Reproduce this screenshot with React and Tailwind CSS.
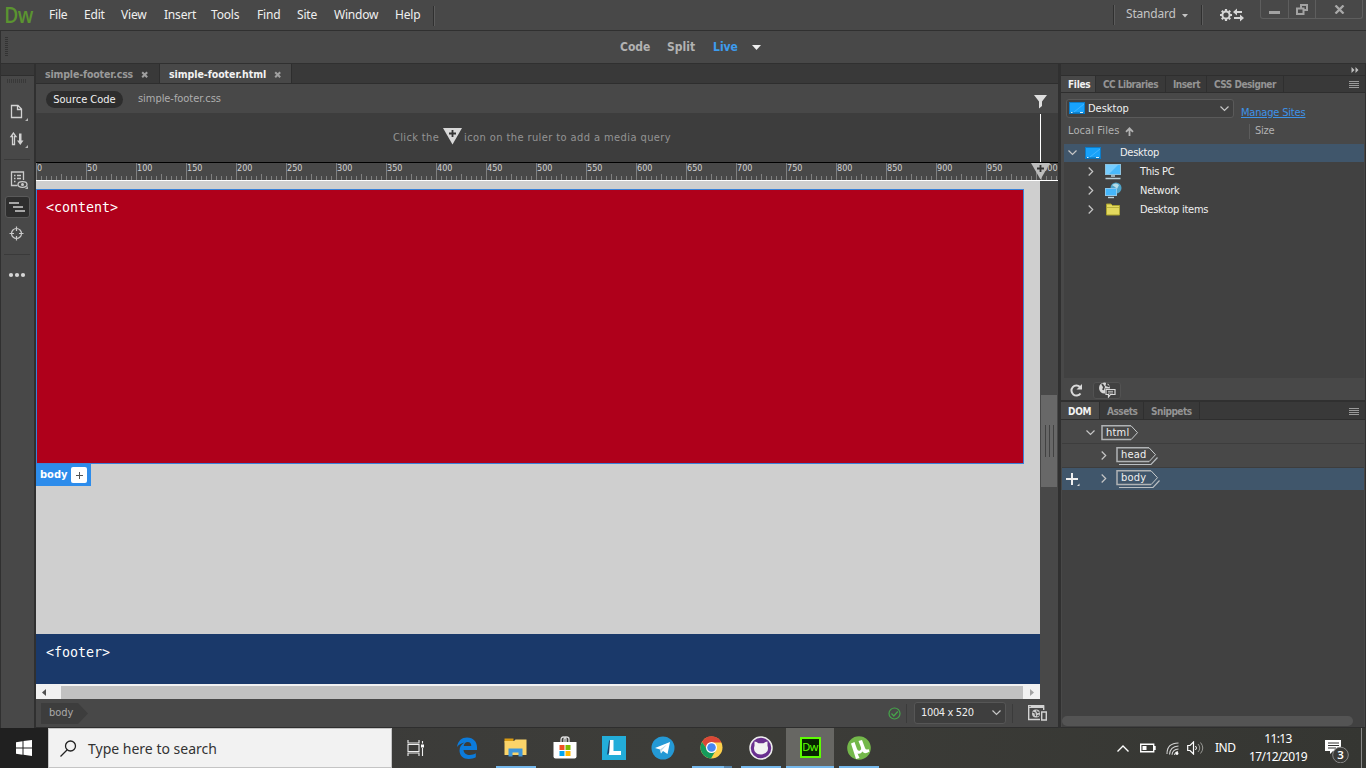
import React from "react";

const ui = "font-['Noto_Sans','Open_Sans',sans-serif]";
const tah = "font-['DejaVu_Sans_Condensed','DejaVu_Sans',sans-serif]";

function Svg({ w, h, className = "", children }) {
  return (
    <svg width={w} height={h} viewBox={`0 0 ${w} ${h}`} className={`block shrink-0 ${className}`} fill="none">
      {children}
    </svg>
  );
}

const menus = [
  ["File", "w-[35px]"],
  ["Edit", "w-[37px]"],
  ["View", "w-[43px]"],
  ["Insert", "w-[47px]"],
  ["Tools", "w-[46px]"],
  ["Find", "w-[40px]"],
  ["Site", "w-[37px]"],
  ["Window", "w-[61px]"],
  ["Help", "w-[38px]"],
];

function MenuBar() {
  return (
    <div className="flex h-[31px] border-b border-[#303030] bg-[#484848]">
      <div className="w-[49px] shrink-0 origin-left scale-x-[0.87] pl-[5px] font-['Open_Sans',sans-serif] text-[22px] leading-[28px] font-semibold tracking-[-0.8px] text-[#5b9430]">Dw</div>
      <div className="flex h-[30px] items-center text-[12px] tracking-[-0.2px] text-[#f0f0f0]">
        {menus.map(([t, w]) => (
          <span key={t} className={`${w} shrink-0`}>{t}</span>
        ))}
        <span className="mt-[1px] h-[20px] w-[2px] border-l border-[#303030] bg-[#5c5c5c]" />
      </div>
      <div className="ml-auto flex">
        <span className="mt-[5px] h-[20px] w-[2px] border-l border-[#303030] bg-[#5c5c5c]" />
        <span className="w-[57px] pl-[11px] text-[12px] leading-[28px] tracking-[-0.2px] text-[#c4c4c4]">Standard</span>
        <Svg w={17} h={30}>
          <path d="M10 14h6l-3 3.500z" fill="#c4c4c4" />
        </Svg>
        <span className="mt-[5px] ml-[12px] h-[20px] w-[2px] border-l border-[#303030] bg-[#5c5c5c]" />
        <Svg w={26} h={30} className="ml-[16px]">
          <g stroke="#d6d6d6">
            <circle cx="7" cy="15" r="3.6" strokeWidth="2" />
            <path d="M7 9v2M7 19v2M1 15h2M11 15h2M2.8 10.8l1.3 1.3M9.9 17.9l1.3 1.3M2.8 19.2l1.3-1.3M9.9 12.1l1.3-1.3" strokeWidth="2.2" />
            <path d="M17 12h6M15 18h7" strokeWidth="2" />
          </g>
          <path d="M18 8.5v7l-4-3.5zM21 14.5v7l4-3.5z" fill="#d6d6d6" />
        </Svg>
        <div className="ml-[15px] flex h-[19px] w-[103px] rounded-b-[3px] border border-t-0 border-[#5e5e5e]">
          <div className="flex w-[28px] justify-center border-r border-[#5e5e5e] pt-[11px]"><span className="h-[3px] w-[11px] bg-[#a2a2a2]" /></div>
          <div className="flex w-[27px] justify-center border-r border-[#5e5e5e] pt-[4px]">
            <Svg w={12} h={11}>
              <path d="M5 3.5V1h6v5H8M1 4.5h6.5V10H1z" stroke="#a2a2a2" strokeWidth="2" />
            </Svg>
          </div>
          <div className="flex flex-1 justify-center pt-[5px]">
            <Svg w={11} h={9}><path d="M1.5 0.5l8 8M9.5 0.5l-8 8" stroke="#a8a8a8" strokeWidth="2.3" /></Svg>
          </div>
        </div>
        <span className="w-[3px]" />
      </div>
    </div>
  );
}

function ViewBar() {
  return (
    <div className="flex h-[33px] items-center border-b border-l border-[#303030] bg-[#484848]">
      <Svg w={7} h={20}>
        {Array.from({ length: 10 }, (_, i) => <path key={i} d={`M4 ${i * 2 + 0.5}h3`} stroke="#333" />)}
      </Svg>
      <div className={`${tah} ml-[612px] flex items-center text-[12px] font-bold text-[#b2b2b2]`}>
        <span className="w-[47px]">Code</span>
        <span className="w-[46px]">Split</span>
        <span className="w-[38px] text-[#3d9bee]">Live</span>
        <Svg w={11} h={6}><path d="M1 1h9L5.5 6z" fill="#eee" /></Svg>
      </div>
    </div>
  );
}

function ToolRail() {
  return (
    <div className="flex w-[36px] shrink-0 flex-col border-x border-r-2 border-[#303030] bg-[#484848]">
      <div className="h-[12px] shrink-0 border-b border-[#2e2e2e] bg-[#393939]" />
      <Svg w={33} h={210}>
        <path d="M6 5h20" stroke="#393939" strokeWidth="4" strokeDasharray="1 1" />
        <g stroke="#d2d2d2" strokeWidth="1.3">
          <path d="M10.500 29.500h6.500l3.500 3.500v8.500h-10zM16.500 30v3.500h4" />
          <path d="M12.500 57l-2.500 3.500h1.500v8h2v-8h1.500z" />
        </g>
        <path d="M27 45v-3l-3 3zM27 72v-3l-3 3z" fill="#b5b5b5" />
        <path d="M18 57.500h2.500v7h2l-3.200 4.500-3.300-4.500h2z" fill="#d2d2d2" />
        <path d="M3 83.500h26M3 178.500h26" stroke="#3a3a3a" />
        <g stroke="#cacaca" strokeWidth="1.300">
          <path d="M16.500 109.500h-6v-13.500h12v8" />
          <path d="M13 99.500h1.500M16 99.500h4M13 102.500h1.500M16 102.500h4M13 105.500h1.500" />
          <ellipse cx="21.500" cy="108.500" rx="4.500" ry="2.800" />
        </g>
        <circle cx="21.500" cy="108.500" r="1.500" fill="#cacaca" />
        <path d="M27 113v-3l-3 3z" fill="#b5b5b5" />
        <rect x="4.500" y="120.500" width="24" height="21" rx="2.500" fill="#2e2e2e" stroke="#5a5a5a" />
        <path d="M8 127h10M12 131h10M14 135h10" stroke="#d0d0d0" strokeWidth="1.700" />
        <circle cx="15.500" cy="157.500" r="5" stroke="#cacaca" strokeWidth="1.200" />
        <path d="M15.500 150.500v4.500M15.500 160v4.500M8.500 157.500h4.500M18 157.500h4.500" stroke="#cacaca" strokeWidth="1.200" />
        <g fill="#d6d6d6"><circle cx="10" cy="199" r="2.100" /><circle cx="16" cy="199" r="2.100" /><circle cx="22" cy="199" r="2.100" /></g>
      </Svg>
    </div>
  );
}

function Close() {
  return <Svg w={8} h={8}><path d="M1.200 1.200l5 5M6.200 1.200l-5 5" stroke="#a0a0a0" strokeWidth="2" /></Svg>;
}

function RulerMarker({ fill = "#d8d8d8" }) {
  return (
    <Svg w={20} h={17}>
      <path d="M0 0h19L9.500 16.500z" fill={fill} />
      <path d="M9.500 2v7M6 5.500h7" stroke="#333" strokeWidth="1.800" />
    </Svg>
  );
}

function Ruler() {
  return (
    <div className="relative h-[18px] border-t border-black bg-[#484848]">
      <Svg w={1022} h={17}>
        {Array.from({ length: 205 }, (_, i) => {
          const h = i % 10 === 0 ? 17 : i % 5 === 0 ? 6 : 4;
          return <path key={i} d={`M${i * 5 + 0.5} ${17 - h}V17`} stroke="#808080" />;
        })}
      </Svg>
      <div className={`${tah} absolute top-0 left-[1px] flex w-[1021px] overflow-hidden text-[9px] leading-[10px] text-[#d0d0d0]`}>
        {Array.from({ length: 21 }, (_, i) => <span key={i} className="w-[50px] shrink-0">{i * 50}</span>)}
      </div>
      <div className="absolute top-0 left-[995px]"><RulerMarker fill="#bcbcbc" /></div>
    </div>
  );
}

function Document() {
  return (
    <div className="flex w-[1023px] shrink-0 flex-col border-r border-[#303030] bg-[#484848]">
      <div className={`${tah} flex h-[20px] shrink-0 border-b border-[#2e2e2e] bg-[#393939] text-[10.500px] font-bold`}>
        <div className="flex w-[124px] items-center border-r border-[#2e2e2e] pt-[2px] pl-[9px] text-[#999]"><span className="w-[96px] tracking-[-0.150px]">simple-footer.css</span><Close /></div>
        <div className="flex w-[132px] items-center border-r border-[#2e2e2e] bg-[#484848] pt-[2px] pl-[9px] text-[#f2f2f2]"><span className="w-[105px] tracking-[-0.050px]">simple-footer.html</span><Close /></div>
      </div>
      <div className={`${tah} relative flex h-[29px] shrink-0 items-center pt-[1px] pl-[10px] text-[11px]`}>
        <span className="h-[17px] w-[77px] rounded-full bg-[#2d2d2d] text-center leading-[17px] text-[#f0f0f0]">Source Code</span>
        <span className="ml-[15px] pt-[1px] tracking-[-0.050px] text-[#aeaeae]">simple-footer.css</span>
        <Svg w={14} h={14} className="absolute top-[11px] left-[998px]"><path d="M0 0h13L8 6.500v4.500L5 13.500v-7z" fill="#dedede" /></Svg>
      </div>
      <div className="flex h-[49px] shrink-0 bg-[#3d3d3d]">
        <div className={`${tah} flex w-[1004px] items-center pl-[357px] text-[11px] text-[#949494]`}>
          <span className="w-[50px] pt-[2px] tracking-[0.350px]">Click the</span>
          <span className="pb-[3px]"><RulerMarker /></span>
          <span className="pt-[2px] pl-[1px] tracking-[0.410px] whitespace-nowrap">icon on the ruler to add a media query</span>
        </div>
        <span className="mt-[1px] w-px bg-white" />
      </div>
      <Ruler />
      <div className="flex min-h-0 flex-1 border-t border-white">
        <div className="w-[1004px] font-['DejaVu_Sans_Mono',monospace] text-[13.300px] text-white">
          <div className="flex h-[503px] flex-col bg-[#cfcfcf]">
            <div className="mt-[8px] h-[275px] w-[988px] border border-[#3b82d8] bg-[#af001b] pt-[9px] pl-[9px] leading-[18px]">&lt;content&gt;</div>
            <div className="flex h-[22px] w-[55px] items-center bg-[#2d8ceb] pl-[4px]">
              <span className={`${tah} w-[31px] text-[11px] font-bold`}>body</span>
              <span className="flex h-[16px] w-[16px] items-center justify-center rounded-[2px] bg-white"><Svg w={7} h={7}><path d="M3.500 0v7M0 3.500h7" stroke="#555" /></Svg></span>
            </div>
            <div className="mt-auto h-[50px] bg-[#1a396a] pt-[10px] pl-[10px] leading-[18px]">&lt;footer&gt;</div>
          </div>
          <div className="flex h-[15px] bg-[#f1f1f1]">
            <Svg w={25} h={15}><path d="M10 5v7L6 8.500z" fill="#505050" /></Svg>
            <span className="mt-[2px] flex-1 bg-[#c1c1c1]" />
            <Svg w={17} h={15}><path d="M7 5v7l4-3.500z" fill="#a3a3a3" /></Svg>
          </div>
        </div>
        <div className="flex-1 pl-[1px]">
          <div className="mt-[214px] flex h-[92px] w-[16px] items-center justify-center gap-[3px] bg-[#686868]">
            {[0, 1, 2].map((i) => <span key={i} className="h-[32px] w-px bg-[#424242]" />)}
          </div>
        </div>
      </div>
      <div className={`${tah} flex h-[29px] shrink-0 items-center border-b border-[#2e2e2e] text-[11px]`}>
        <div className="relative ml-[5px] flex h-[21px] w-[48px] items-center">
          <Svg w={48} h={21} className="absolute inset-0"><path d="M0 0h37l10 10.500L37 21H0z" fill="#3d3d3d" /></Svg>
          <span className="relative pt-[1px] pl-[8px] text-[11px] text-[#a9a9a9]">body</span>
        </div>
        <Svg w={13} h={13} className="ml-[799px]"><circle cx="6.500" cy="6.500" r="5.500" stroke="#46a54a" strokeWidth="1.200" /><path d="M3.500 6.500l2.300 2.500 4-4.500" stroke="#46a54a" strokeWidth="1.300" /></Svg>
        <span className="ml-[5px] h-[19px] w-px bg-[#3b3b3b]" />
        <div className="ml-[7px] flex h-[22px] w-[92px] items-center justify-between rounded-[3px] border border-[#565656] bg-[#3e3e3e] pr-[4px] pl-[6px] text-[#ededed]">
          <span className="pt-[1px] tracking-[-0.350px]">1004 x 520</span>
          <Svg w={9} h={6}><path d="M0.500 0.500l4 4 4-4" stroke="#c6c6c6" strokeWidth="1.200" /></Svg>
        </div>
        <span className="ml-[6px] h-[19px] w-px bg-[#3b3b3b]" />
        <Svg w={20} h={16} className="ml-[15px]">
          <path d="M12 14.500H0.700V1h15v4" stroke="#d2d2d2" strokeWidth="1.400" /><path d="M0 1.500h16" stroke="#d2d2d2" strokeWidth="3" /><path d="M1.500 1.500h1" stroke="#484848" />
          <circle cx="8" cy="8.500" r="4" fill="#cacaca" /><path d="M4.500 7l2.500 1 .5 3M8.500 5.500l1 2 2-.5M9 11l2-1" stroke="#484848" strokeWidth="1.100" />
          <path d="M13.700 7h4.600v8h-4.600z" fill="#484848" stroke="#d2d2d2" strokeWidth="1.400" />
        </Svg>
      </div>
    </div>
  );
}

function Burger() {
  return <Svg w={10} h={8}><path d="M0 0.500h10M0 2.500h10M0 4.500h10M0 6.500h10" stroke="#9b9b9b" /></Svg>;
}

function PanelTabs({ items, className }) {
  return (
    <div className={`${tah} flex border-b border-[#2e2e2e] bg-[#393939] text-[10px] font-bold text-[#949494] ${className}`}>
      {items.map(([t, w], i) => (
        <div key={t} className={`${w} flex shrink-0 items-center border-r border-[#2f2f2f] pt-[1px] whitespace-nowrap ${i === 0 ? "bg-[#484848] pl-[7px] tracking-[-0.300px] text-[#f2f2f2]" : "pl-[7px] tracking-[-0.500px]"}`}>{t}</div>
      ))}
      <div className="ml-auto flex items-center pt-[2px] pr-[6px]"><Burger /></div>
    </div>
  );
}

function Screen() {
  return (
    <Svg w={16} h={13}>
      <rect x="0.500" y="0.500" width="15" height="11" fill="#18a2fb" stroke="#0c7cc8" />
      <path d="M1 11h14" stroke="#0869a8" /><path d="M2 10.500h1.500M11 10.500h3" stroke="#d8f0ff" />
      <path d="M5 10L15 2" stroke="#42b6ff" />
    </Svg>
  );
}
function Pc() {
  return (
    <Svg w={17} h={16}>
      <rect x="0.500" y="0.500" width="15" height="10" fill="#49b9fb" stroke="#8cc2df" /><path d="M1 1h12L4 10H1z" fill="#76cdff" />
      <path d="M6 12h4M0.500 14.500h15" stroke="#b8ced8" strokeWidth="1.500" />
    </Svg>
  );
}
function Net() {
  return (
    <Svg w={17} h={17}>
      <circle cx="11" cy="6" r="5.500" fill="#4ea3c8" /><path d="M7 3q4-3 7 0l-2 4-2-2z" fill="#b7dce6" />
      <rect x="0.500" y="6.500" width="11" height="7" fill="#45b6fb" stroke="#8cc8ec" /><path d="M3 15.500h6" stroke="#bfd4de" strokeWidth="1.400" />
    </Svg>
  );
}
function Folder() {
  return (
    <Svg w={17} h={14}>
      <path d="M1.500 1h4.500l1.500 1.500h7v9.500h-13z" fill="#e3d95e" stroke="#aaa22e" /><path d="M2 4.500h12" stroke="#bdb43d" />
    </Svg>
  );
}
function Chevron({ down }) {
  return down ? (
    <Svg w={9} h={6}><path d="M0.500 0.500l4 4 4-4" stroke="#c6c6c6" strokeWidth="1.200" /></Svg>
  ) : (
    <Svg w={6} h={9}><path d="M0.700 0.500l4 4-4 4" stroke="#c6c6c6" strokeWidth="1.200" /></Svg>
  );
}

function FilesPanel() {
  const rows = [["This PC", Pc], ["Network", Net], ["Desktop items", Folder]];
  return (
    <div className={`${tah} flex h-[338px] shrink-0 flex-col border-b-2 border-[#303030] text-[11px] tracking-[-0.250px] text-[#f0f0f0]`}>
      <div className="flex h-[12px] shrink-0 items-center justify-end border-b border-[#2e2e2e] bg-[#393939] pr-[6px]">
        <Svg w={8} h={6}><path d="M0.500 0v6l3-3zM4.500 0v6l3-3z" fill="#bdbdbd" /></Svg>
      </div>
      <PanelTabs className="h-[17px] shrink-0" items={[["Files", "w-[35px]"], ["CC Libraries", "w-[70px]"], ["Insert", "w-[41px]"], ["CSS Designer", "w-[77px]"]]} />
      <div className="flex h-[25px] shrink-0 pt-[6px] pl-[5px]">
        <div className="flex h-[19px] w-[168px] items-center rounded-[3px] border border-[#5a5a5a] bg-[#404040] pl-[2px]">
          <Screen /><span className="flex-1 pt-[2px] pl-[3px] tracking-[0px]">Desktop</span><span className="pr-[4px]"><Chevron down /></span>
        </div>
        <span className="pt-[6px] pl-[7px] text-[11px] leading-[15px] tracking-[-0.180px] text-[#3d93e8] underline">Manage Sites</span>
      </div>
      <div className="flex h-[26px] shrink-0 items-center pl-[7px] text-[#b2b2b2]">
        <span className="pt-[1px] tracking-[0.100px]">Local Files</span>
        <Svg w={10} h={9} className="ml-[5px]"><path d="M4.500 9V1.500M1 4.800L4.500 1.300 8 4.800" stroke="#b2b2b2" strokeWidth="1.800" /></Svg>
        <span className="ml-auto h-[15px] w-px bg-[#5c5c5c]" /><span className="w-[115px] pt-[1px] pl-[5px]">Size</span>
      </div>
      <div className="mx-[3px] mr-[1px] flex-1 bg-[#414141]">
        <div className="flex h-[18px] items-center bg-[#40566b] pl-[4px]"><Chevron down /><span className="w-[43px] pl-[8px]"><Screen /></span><span>Desktop</span></div>
        {rows.map(([t, I]) => (
          <div key={t} className="flex h-[19px] items-center pl-[24px]"><Chevron /><span className="w-[46px] pl-[11px]"><I /></span><span className="pt-[2px]">{t}</span></div>
        ))}
      </div>
      <div className="flex h-[22px] shrink-0 items-center pt-[2px] pl-[9px]">
        <Svg w={13} h={13}><path d="M10.500 9.500a5 5 0 1 1-.5-6.500" stroke="#dadada" strokeWidth="2" /><path d="M12 0v5.500H6.500z" fill="#dadada" /></Svg>
        <div className="ml-[10px] flex h-[17px] w-[28px] items-center justify-center rounded-[3px] border border-[#525252] bg-[#414141]">
          <Svg w={18} h={16}>
            <circle cx="6.500" cy="6" r="5.500" fill="#d6d6d6" /><path d="M4 2l2 3-1 3M9 1l-.5 2.500 3 1" stroke="#414141" strokeWidth="1.800" />
            <path d="M7 6.500h11v9H7z" fill="#414141" /><path d="M8 7.500h9v5h-4.500l-2 2.500v-2.500H8z" stroke="#dadada" strokeWidth="1.200" /><path d="M10 9.300h5M10 11h5" stroke="#dadada" strokeWidth=".8" />
          </Svg>
        </div>
      </div>
    </div>
  );
}

function Tag({ text, w, stacked }) {
  return (
    <div className="relative h-[19px]">
      <Svg w={46} h={19}>
        <path d={`M${w - 7} 14.500H1V0.700h${w - 8}`} stroke="#b0b3b5" strokeWidth="1.500" />
        <path d={`M${w - 7} 0.700l6.500 7-6.500 7`} stroke="#c8ccce" />
        {stacked && <path d={`M3 17.500h${w - 8}l6.500-7`} stroke="#b9bec2" strokeWidth="1.200" />}
      </Svg>
      <span className="absolute top-px left-[5px] leading-[14px] tracking-[0.200px]">{text}</span>
    </div>
  );
}

function DomPanel() {
  return (
    <div className={`${tah} flex min-h-0 flex-1 flex-col border-b border-[#2e2e2e] text-[11px] text-[#f0f0f0]`}>
      <PanelTabs className="h-[18px] shrink-0" items={[["DOM", "w-[39px]"], ["Assets", "w-[44px]"], ["Snippets", "w-[56px]"]]} />
      <div className="mr-[1px] ml-[1px] flex flex-1 flex-col bg-[#414141]">
        <div className="flex h-[24px] border-b border-[#3d3d3d] bg-[#484848] pt-[5px] pl-[24px]"><span className="mt-[5px] w-[15px]"><Chevron down /></span><Tag text="html" w={37} /></div>
        <div className="flex h-[24px] border-b border-[#3d3d3d] bg-[#484848] pt-[3px] pl-[39px]"><span className="mt-[4px] w-[15px]"><Chevron /></span><Tag text="head" w={40} stacked /></div>
        <div className="flex h-[22px] bg-[#40566b] pt-[2px] pl-[4px]">
          <Svg w={15} h={16} className="mr-[20px]"><path d="M6 3v12M0 9h12" stroke="#eee" strokeWidth="2" /><path d="M13.500 16v-2.500L11 16z" fill="#ddd" /></Svg>
          <span className="mt-[4px] w-[15px]"><Chevron /></span><Tag text="body" w={42} stacked />
        </div>
        <div className="mt-auto mr-[11px] mb-[1px] h-[10px] rounded-full bg-[#545454]" />
      </div>
    </div>
  );
}

function TaskItem({ children, active, className = "w-[49px]", bar = "w-[40px]" }) {
  return (
    <div className={`flex shrink-0 flex-col items-center ${className}`}>
      <div className="flex flex-1 items-center pt-[1px]">{children}</div>
      <div className={`h-[2px] ${bar} ${active ? "bg-[#76b9ed]" : ""}`} />
    </div>
  );
}

function TaskBar() {
  return (
    <div className={`${ui} flex h-[40px] shrink-0 bg-gradient-to-r from-[#3a3a3a] via-[#3d3d39] to-[#353632] text-white`}>
      <div className="flex w-[48px] shrink-0 items-center justify-center bg-[#202020]">
        <Svg w={16} h={16}><path d="M0 2.300l6.500-1v6.200H0zM7.500 1.100L16 0v7.500H7.500zM0 8.500h6.500v6.200L0 13.700zM7.500 8.500H16V16l-8.500-1.200z" fill="#fff" /></Svg>
      </div>
      <div className="flex w-[344px] shrink-0 items-center border border-[#c4c4c4] bg-[#f2f2f2] text-[#333]">
        <Svg w={17} h={17} className="ml-[11px]"><circle cx="10.500" cy="6" r="5" stroke="#222" strokeWidth="1.300" /><path d="M7 10l-6.500 6.500" stroke="#222" strokeWidth="1.300" /></Svg>
        <span className="pl-[11px] text-[14px]">Type here to search</span>
      </div>
      <div className="flex">
        <TaskItem className="w-[48px]">
          <Svg w={18} h={16}><path d="M1 0v3h11V0M1 16v-3h11v3M1 4.500h11v7H1zM15.500 1v2.500M15.500 8v8" stroke="#eee" strokeWidth="1.100" /><path d="M14 4.500h3v3h-3z" fill="#fff" /></Svg>
        </TaskItem>
        <TaskItem className="w-[51px] pl-[2px]">
          <Svg w={22} h={22}><path d="M1 10C2 3.500 6 .5 11 .5c6.500 0 10 4.500 10 9.800V13H7.500c.3 3.500 3 5 6.300 5 2.300 0 4.300-.7 6-1.700v4c-2 1-4.300 1.700-7 1.700-5.500 0-9.300-3.300-9.300-8.500 0-3.500 2-6.500 5-8C5 6 2.500 8 1 10zm6.700-1h7.600c0-2.500-1.300-4-3.600-4-2.200 0-3.500 1.500-4 4z" fill="#0c7bdb" /></Svg>
        </TaskItem>
        <TaskItem active>
          <Svg w={23} h={19}><path d="M0.500 0.500h9v4h-9z" fill="#d99b12" /><path d="M0.500 3H10l1.500-1.500h11V17H.5z" fill="#fbd469" /><path d="M4.500 18.500v-8h14v8h-4v-4h-6v4z" fill="#3f96db" /></Svg>
        </TaskItem>
        <TaskItem>
          <Svg w={24} h={24}><path d="M8 6V4q0-3 2.500-3T13 3v3M11 6V4q0-3 2.500-3T16 3v3" stroke="#ddd" strokeWidth="1.300" /><path d="M.5 6h23v14.500q0 2-2 2h-19q-2 0-2-2z" fill="#fff" /><path d="M6.500 9h5v5h-5z" fill="#f05022" /><path d="M12.500 9h5v5h-5z" fill="#7fba00" /><path d="M6.500 15h5v5h-5z" fill="#00a4ef" /><path d="M12.500 15h5v5h-5z" fill="#ffb900" /></Svg>
        </TaskItem>
        <TaskItem>
          <Svg w={24} h={24}><path d="M0 0h24v24H0z" fill="#23add9" /><path d="M8 4v12l-3 3 2-14z" fill="#143e69" /><path d="M8 4h3.500v11H19v4H7z" fill="#fff" /></Svg>
        </TaskItem>
        <TaskItem>
          <Svg w={24} h={24}><circle cx="12" cy="12" r="11.500" fill="#2499d5" /><path d="M4 12l15-6-2.500 12-4.500-3-2 2.500-1-4z" fill="#fff" /><path d="M9 13.500l7-5-5.500 6-.5 3z" fill="#b8d7e8" /></Svg>
        </TaskItem>
        <TaskItem active bar="w-[40px] border-r-8 border-[#5685ac]">
          <Svg w={23} h={23}><circle cx="11.500" cy="11.500" r="11" fill="#fdd04b" /><path d="M2 6a11 11 0 0 1 19.500.5H11.500L7.500 14z" fill="#db4737" /><path d="M2 6a11 11 0 0 0 9 16.500l5-8.500-8.500 0z" fill="#159b5c" /><circle cx="11.500" cy="11.500" r="5.500" fill="#fff" /><circle cx="11.500" cy="11.500" r="4.300" fill="#4787f1" /></Svg>
        </TaskItem>
        <TaskItem active>
          <Svg w={24} h={24}><circle cx="12" cy="12" r="11" fill="#69308f" stroke="#eee" strokeWidth="1.500" /><path d="M5.500 5.500q2 0 4 1.700h5q2-1.700 4-1.700V10q1 2 0 5-2 3.500-6.500 3.500T5.500 15q-1-3 0-5z" fill="#f2f2f2" /></Svg>
        </TaskItem>
        <TaskItem active className="ml-[1px] w-[48px] bg-[#676763]" bar="w-full">
          <div className="flex h-[21px] w-[21px] items-center justify-center border-2 border-[#5dfc02] bg-[#072401] text-[11px] tracking-[-0.500px] text-[#5dfc02]">Dw</div>
        </TaskItem>
        <TaskItem active>
          <Svg w={24} h={24}><circle cx="12" cy="12" r="11.800" fill="#74b84a" /><path d="M4 7.500l3.500-1.500 2.500 7q1 2.500 3 1.500 1.800-1 1-3L11.500 5 15 4l3 8q1 2.500 3.500 1l1 2.500q-5 3.500-7 0-2 3-5 2l2 4.500-3.500 1z" fill="#fff" /></Svg>
        </TaskItem>
      </div>
      <div className="ml-auto flex h-[40px] items-center text-[12px]">
        <Svg w={12} h={7}><path d="M.5 6.500l5.500-5.500 5.500 5.500" stroke="#fff" strokeWidth="1.400" /></Svg>
        <Svg w={16} h={10} className="ml-[11px]"><path d="M.7 1.200h13v7.600H.7zM15 3v4" stroke="#fff" strokeWidth="1.400" /><path d="M2.500 3h4v4h-4z" fill="#fff" /></Svg>
        <Svg w={13} h={13} className="ml-[10px]"><path d="M1 12Q1 1 12.500 1M3.500 12.500Q4 4.500 12.500 4M6 12.700Q6.500 7.500 12.500 7M8.500 13q.5-3 3.500-3.500" stroke="#d3d3d3" strokeWidth="1.100" /><circle cx="11" cy="11.500" r="1.400" fill="#fff" /></Svg>
        <Svg w={17} h={14} className="ml-[8px]"><path d="M.7 4.500H3L6.500 1v12L3 9.500H.7z" stroke="#fff" strokeWidth="1.200" /><path d="M8.500 5q2 2 0 4" stroke="#fff" /><path d="M11 3q3.500 4 0 8M13.500 1.500q4.500 5.500 0 11" stroke="#9a9a96" /></Svg>
        <span className="w-[34px] pl-[11px] tracking-[-0.500px]">IND</span>
        <div className="w-[80px] text-center leading-[18px] tracking-[-0.600px]"><div>11:13</div><div>17/12/2019</div></div>
        <Svg w={26} h={30} className="ml-[6px]">
          <path d="M1 7h16v11H9l-3 3v-3H1z" fill="#fff" /><path d="M4 10h11M4 12.500h11M4 15h8" stroke="#333" />
          <circle cx="16.500" cy="22" r="7.800" fill="#3a3a37" stroke="#888" />
          <text x="13.200" y="26.200" fontSize="11.500" fontWeight="600" fill="#fff" fontFamily="Noto Sans">3</text>
        </Svg>
        <span className="ml-[11px] h-[40px] w-px bg-[#888]" /><span className="w-[4px]" />
      </div>
    </div>
  );
}

export default function App() {
  return (
    <div className={`${ui} flex h-[768px] w-[1366px] flex-col overflow-hidden bg-[#484848]`}>
      <MenuBar />
      <ViewBar />
      <div className="flex h-[664px] shrink-0">
        <ToolRail />
        <Document />
        <div className="flex min-w-0 flex-1 flex-col border-r border-l-2 border-[#303030] bg-[#484848]">
          <FilesPanel />
          <DomPanel />
        </div>
      </div>
      <TaskBar />
    </div>
  );
}
